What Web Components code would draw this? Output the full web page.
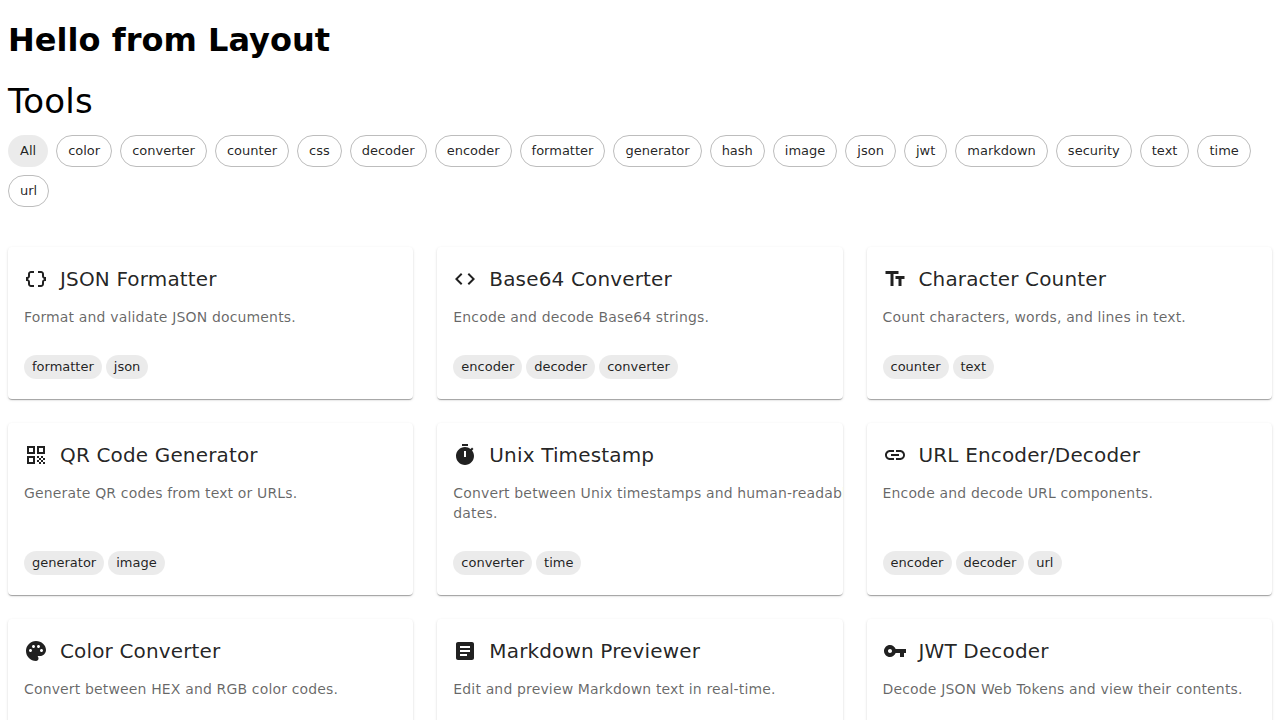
<!DOCTYPE html>
<html lang="en">
<head>
<meta charset="utf-8">
<title>Tools</title>
<style>
body { margin: 0; background: #fff; color: #000; font-family: "DejaVu Sans", sans-serif; }
</style>
</head>
<body>
<app-layout><tools-page></tools-page></app-layout>
<script>
const ICONS = {
  braces: 'M4 7v2c0 .55-.45 1-1 1H2v4h1c.55 0 1 .45 1 1v2c0 1.65 1.35 3 3 3h3v-2H7c-.55 0-1-.45-1-1v-2c0-1.3-.84-2.42-2-2.83v-.34C5.16 11.42 6 10.3 6 9V7c0-.55.45-1 1-1h3V4H7C5.35 4 4 5.35 4 7zm17 3c-.55 0-1-.45-1-1V7c0-1.65-1.35-3-3-3h-3v2h3c.55 0 1 .45 1 1v2c0 1.3.84 2.42 2 2.83v.34c-1.16.41-2 1.52-2 2.83v2c0 .55-.45 1-1 1h-3v2h3c1.65 0 3-1.35 3-3v-2c0-.55.45-1 1-1h1v-4h-1z',
  code: 'M9.4 16.6 4.8 12l4.6-4.6L8 6l-6 6 6 6zm5.2 0 4.6-4.6-4.6-4.6L16 6l6 6-6 6z',
  text: 'M2.5 4v3h5v12h3V7h5V4zm19 5h-9v3h3v7h3v-7h3z',
  qr: 'M3 11h8V3H3zm2-6h4v4H5zM3 21h8v-8H3zm2-6h4v4H5zm8-12v8h8V3zm6 6h-4V5h4zm0 10h2v2h-2zm-6-6h2v2h-2zm2 2h2v2h-2zm-2 2h2v2h-2zm2 2h2v2h-2zm2-2h2v2h-2zm0-4h2v2h-2zm2 2h2v2h-2z',
  timer: 'M9 1h6v2H9zm10.03 6.39 1.42-1.42c-.43-.51-.9-.99-1.41-1.41l-1.42 1.42C16.07 4.74 14.12 4 12 4c-4.97 0-9 4.03-9 9s4.02 9 9 9 9-4.03 9-9c0-2.12-.74-4.07-1.97-5.61M13 14h-2V8h2z',
  link: 'M3.9 12c0-1.71 1.39-3.1 3.1-3.1h4V7H7c-2.76 0-5 2.24-5 5s2.24 5 5 5h4v-1.9H7c-1.71 0-3.1-1.39-3.1-3.1M8 13h8v-2H8zm9-6h-4v1.9h4c1.71 0 3.1 1.39 3.1 3.1s-1.39 3.1-3.1 3.1h-4V17h4c2.76 0 5-2.24 5-5s-2.24-5-5-5',
  palette: 'M12 2C6.49 2 2 6.49 2 12s4.49 10 10 10c1.38 0 2.5-1.12 2.5-2.5 0-.61-.23-1.2-.64-1.67-.08-.1-.13-.21-.13-.33 0-.28.22-.5.5-.5H16c3.31 0 6-2.69 6-6 0-4.96-4.49-9-10-9m5.5 11c-.83 0-1.5-.67-1.5-1.5s.67-1.5 1.5-1.5 1.5.67 1.5 1.5-.67 1.5-1.5 1.5m-3-4c-.83 0-1.5-.67-1.5-1.5S13.67 6 14.5 6s1.5.67 1.5 1.5S15.33 9 14.5 9M5 11.5c0-.83.67-1.5 1.5-1.5s1.5.67 1.5 1.5S7.33 13 6.5 13 5 12.33 5 11.5m6-4c0 .83-.67 1.5-1.5 1.5S8 8.33 8 7.5 8.67 6 9.5 6s1.5.67 1.5 1.5',
  article: 'M19 3H5c-1.1 0-2 .9-2 2v14c0 1.1.9 2 2 2h14c1.1 0 2-.9 2-2V5c0-1.1-.9-2-2-2m-5 14H7v-2h7zm3-4H7v-2h10zm0-4H7V7h10z',
  key: 'M12.65 10C11.83 7.67 9.61 6 7 6c-3.31 0-6 2.69-6 6s2.69 6 6 6c2.61 0 4.83-1.67 5.65-4H17v4h4v-4h2v-4zM7 14c-1.1 0-2-.9-2-2s.9-2 2-2 2 .9 2 2-.9 2-2 2'
};

const TAGS = ['color', 'converter', 'counter', 'css', 'decoder', 'encoder', 'formatter', 'generator', 'hash',
  'image', 'json', 'jwt', 'markdown', 'security', 'text', 'time', 'url'];

const TOOLS = [
  ['braces', 'JSON Formatter', 'Format and validate JSON documents.', ['formatter', 'json']],
  ['code', 'Base64 Converter', 'Encode and decode Base64 strings.', ['encoder', 'decoder', 'converter']],
  ['text', 'Character Counter', 'Count characters, words, and lines in text.', ['counter', 'text']],
  ['qr', 'QR Code Generator', 'Generate QR codes from text or URLs.', ['generator', 'image']],
  ['timer', 'Unix Timestamp', 'Convert between Unix timestamps and human-readable dates.', ['converter', 'time']],
  ['link', 'URL Encoder/Decoder', 'Encode and decode URL components.', ['encoder', 'decoder', 'url']],
  ['palette', 'Color Converter', 'Convert between HEX and RGB color codes.', ['color', 'converter']],
  ['article', 'Markdown Previewer', 'Edit and preview Markdown text in real-time.', ['markdown', 'text']],
  ['key', 'JWT Decoder', 'Decode JSON Web Tokens and view their contents.', ['jwt', 'decoder']]
];

function define(name, render) {
  customElements.define(name, class extends HTMLElement {
    connectedCallback() {
      if (this.shadowRoot) return;
      this.attachShadow({ mode: 'open' }).innerHTML = render(this);
    }
  });
}

define('tool-icon', el => `
  <style>
    :host { display: block; width: 24px; height: 24px; flex: none; }
    svg { display: block; width: 100%; height: 100%; fill: currentColor; }
  </style>
  <svg viewBox="0 0 24 24" aria-hidden="true"><path d="${ICONS[el.getAttribute('name')]}"/></svg>`);

define('tag-chip', () => `
  <style>
    :host { display: inline-flex; align-items: center; box-sizing: border-box; height: 32px; padding: 0 12px 1.5px;
      border-radius: 16px; background: rgba(0,0,0,.08); color: rgba(0,0,0,.87);
      font-size: 13px; line-height: 19.5px; white-space: nowrap; cursor: pointer; }
    :host([outlined]) { background: transparent; border: 1px solid #bdbdbd; padding: 0 11px 1.5px; }
    :host([small]) { height: 24px; padding: 0 calc(8px + var(--nudge, 0px)) 1.5px calc(8px - var(--nudge, 0px)); }
  </style><slot></slot>`);

define('tool-card', () => `
  <style>
    :host { display: flex; flex-direction: column; box-sizing: border-box; padding: 16px 16px 20px; overflow: hidden;
      background: #fff; color: rgba(0,0,0,.87); border-radius: 4px;
      box-shadow: 0 2px 1px -1px rgba(0,0,0,.2), 0 1px 1px 0 rgba(0,0,0,.14), 0 1px 3px 0 rgba(0,0,0,.12); }
    header { display: flex; align-items: center; gap: calc(12px - var(--nudge, 0px)); margin-bottom: 12px; }
    h6 { margin: 0; font-weight: 400; font-size: 20px; line-height: 32px; letter-spacing: .0075em; }
    /* descriptions may run past the card's padding and are clipped at its edge */
    p { width: calc(100% + 32px); margin: 0 0 28px calc(0px - var(--nudge, 0px)); font-size: 14px; line-height: 20px;
      letter-spacing: .01071em; color: rgba(0,0,0,.6); }
    .tags { display: flex; flex-wrap: wrap; gap: 3.96px; margin-top: auto; }
  </style>
  <header><slot name="icon"></slot><h6><slot name="title"></slot></h6></header>
  <p><slot></slot></p>
  <div class="tags"><slot name="tag"></slot></div>`);

define('tools-page', () => `
  <style>
    :host { display: block; }
    h4 { margin: 0 0 12.5px; font-weight: 400; font-size: 34px; line-height: 1.235; letter-spacing: .00735em; }
    nav { display: flex; flex-wrap: wrap; gap: 8px; margin-bottom: 40px; }
    main { display: grid; grid-template-columns: repeat(3, minmax(0, 1fr)); gap: 24px; }
    /* keeps third-column text on whole pixels */
    tool-card:nth-child(3n) { --nudge: .15px; }
  </style>
  <h4>Tools</h4>
  <nav><tag-chip>All</tag-chip>${TAGS.map(t => `<tag-chip outlined>${t}</tag-chip>`).join('')}</nav>
  <main>${TOOLS.map(([icon, title, text, tags]) => `<tool-card>
    <tool-icon slot="icon" name="${icon}"></tool-icon><span slot="title">${title}</span>${text}
    ${tags.map(t => `<tag-chip small slot="tag">${t}</tag-chip>`).join('')}</tool-card>`).join('')}</main>`);

define('app-layout', () => `
  <style>
    :host { display: block; padding: 8px; }
    h1 { margin: 13.44px 0 21.44px; font-size: 32px; font-weight: 700; letter-spacing: .03px; }
  </style>
  <h1>Hello from Layout</h1>
  <slot></slot>`);
</script>
</body>
</html>
